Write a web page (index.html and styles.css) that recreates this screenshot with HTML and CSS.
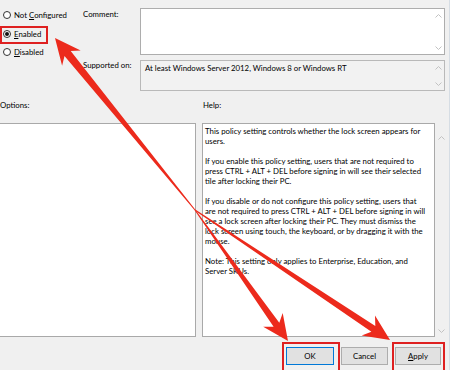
FILE: index.html
```html
<!DOCTYPE html>
<html lang="en">
<head>
    <meta charset="UTF-8">
    <title>Turn on lock screen</title>
    <link rel="stylesheet" href="styles.css">
</head>
<body>
    <div class="dialog">
        <div class="settings">
            <div class="state">
                <label class="radio"><span class="dot"></span><span>Not <u>C</u>onfigured</span></label>
                <label class="radio checked"><span class="dot"></span><span><u>E</u>nabled</span></label>
                <label class="radio"><span class="dot"></span><span><u>D</u>isabled</span></label>
            </div>
            <div class="field-label">Comment:</div>
            <div class="box comment">
                <div class="scroll">
                    <svg class="chev" viewBox="0 0 7 4"><path d="M0.5 3.5 L3.5 0.5 L6.5 3.5"/></svg>
                    <svg class="chev" viewBox="0 0 7 4"><path d="M0.5 0.5 L3.5 3.5 L6.5 0.5"/></svg>
                </div>
            </div>
            <div class="field-label supported-label">Supported on:</div>
            <div class="box supported">
                <span class="supported-text">At least Windows Server 2012, Windows 8 or Windows RT</span>
                <div class="scroll">
                    <svg class="chev" viewBox="0 0 7 4"><path d="M0.5 3.5 L3.5 0.5 L6.5 3.5"/></svg>
                    <svg class="chev" viewBox="0 0 7 4"><path d="M0.5 0.5 L3.5 3.5 L6.5 0.5"/></svg>
                </div>
            </div>
        </div>

        <div class="panes-head">
            <span class="options-title">Options:</span>
            <span>Help:</span>
        </div>

        <div class="panes">
            <div class="options"></div>
            <div class="help">
                <div class="help-text">
                    <p>This policy setting controls whether the lock screen appears for<br>users.</p>
                    <p>If you enable this policy setting, users that are not required to<br>press CTRL + ALT + DEL before signing in will see their selected<br>tile after locking their PC.</p>
                    <p>If you disable or do not configure this policy setting, users that<br>are not required to press CTRL + ALT + DEL before signing in will<br>see a lock screen after locking their PC. They must dismiss the<br>lock screen using touch, the keyboard, or by dragging it with the<br>mouse.</p>
                    <p>Note: This setting only applies to Enterprise, Education, and<br>Server SKUs.</p>
                </div>
                <div class="scroll help-scroll">
                    <svg class="chev" viewBox="0 0 7 4"><path d="M0.5 3.5 L3.5 0.5 L6.5 3.5"/></svg>
                    <svg class="chev" viewBox="0 0 7 4"><path d="M0.5 0.5 L3.5 3.5 L6.5 0.5"/></svg>
                </div>
            </div>
        </div>

        <div class="buttons">
            <button class="btn default" type="button">OK</button>
            <button class="btn cancel" type="button">Cancel</button>
            <button class="btn apply" type="button"><u>A</u>pply</button>
        </div>
    </div>

    <!-- annotation layer -->
    <div class="mark mark-enabled"></div>
    <div class="mark mark-ok"></div>
    <div class="mark mark-apply"></div>
    <svg class="arrows" viewBox="0 0 450 370">
        <polygon points="195.4,209.7 70.7,51.0 80.7,50.6 55,38 62.1,65.7 64.5,56.0 194.6,210.3"/>
        <polygon points="194.6,210.3 273.6,326.7 263.2,326.7 288,341 282.7,312.9 279.3,322.7 195.4,209.7"/>
        <polygon points="194.7,210.4 371.4,331.8 361.7,335.6 390,340 375.0,315.6 375.3,326.0 195.3,209.6"/>
    </svg>
</body>
</html>
```

FILE: styles.css
```css
body {
    margin: 0;
    width: 450px;
    height: 370px;
    overflow: hidden;
    background-color: #f0f0f0;
    font-family: Lato, "Noto Sans", sans-serif;
    font-size: 7.8px;
    line-height: 10px;
    color: #000;
    position: relative;
}
.dialog {
    width: 449px;
    height: 370px;
    border-right: 1px solid #d6dde4;
}
.settings {
    display: grid;
    grid-template-columns: 83px 57px 305px;
    grid-template-rows: 47px 31px;
    row-gap: 5px;
    padding-top: 8px;
}
.state {
    grid-row: 1 / 3;
    display: flex;
    flex-direction: column;
    margin-top: -2px;
    padding-left: 3px;
}
.radio {
    display: flex;
    align-items: center;
    height: 18.5px;
    white-space: nowrap;
}
.dot {
    width: 8px;
    height: 8px;
    box-sizing: border-box;
    border: 1px solid #333;
    border-radius: 50%;
    background-color: #fff;
    margin-right: 3px;
    display: flex;
    align-items: center;
    justify-content: center;
}
.checked .dot::after {
    content: "";
    width: 4px;
    height: 4px;
    border-radius: 50%;
    background-color: #111;
}
.field-label {
    padding-top: 1px;
    white-space: nowrap;
}
.supported-label {
    padding-top: 0;
}
.box {
    border: 1px solid #adadad;
    display: flex;
    justify-content: space-between;
}
.comment {
    background-color: #fff;
}
.supported {
    background-color: #f2f2f2;
    border-color: #b9b9b9;
}
.supported-text {
    padding: 2px 0 0 4px;
    white-space: nowrap;
}
.scroll {
    width: 11px;
    display: flex;
    flex-direction: column;
    justify-content: space-between;
    align-items: center;
    padding: 5px 0 4px;
    margin-left: auto;
}
.chev {
    width: 7px;
    height: 4px;
    fill: none;
    stroke: #c2c2c2;
    stroke-width: 1;
}
.panes-head {
    display: flex;
    margin-top: 9px;
}
.options-title {
    width: 203px;
}
.panes {
    display: flex;
    gap: 6px;
    margin-top: 13px;
    height: 214px;
}
.options {
    width: 197px;
    margin-left: -1px;
    box-sizing: border-box;
    border: 1px solid #a9a9a9;
    background-color: #fff;
}
.help {
    display: flex;
    width: 245px;
}
.help-text {
    width: 233px;
    box-sizing: border-box;
    border: 1px solid #a9a9a9;
    background-color: #fff;
    padding: 2px 0 0 2px;
    white-space: nowrap;
}
.help-text p {
    margin: 0 0 10px;
}
.help-scroll {
    width: 12px;
    padding: 13px 0 4px;
}
.buttons {
    display: flex;
    justify-content: flex-end;
    gap: 7px;
    padding-right: 8px;
    margin-top: 10px;
}
.btn {
    height: 18px;
    padding: 0;
    font-family: inherit;
    font-size: 7.8px;
    color: #000;
    background-color: #e1e1e1;
    border: 1px solid #adadad;
}
.btn.default {
    width: 48px;
    border-color: #0078d7;
}
.btn.cancel {
    width: 47px;
}
.btn.apply {
    width: 46px;
}
.mark {
    position: absolute;
    border: 2px solid #de2020;
    box-sizing: border-box;
}
.mark-enabled {
    left: 0;
    top: 26px;
    width: 48px;
    height: 18px;
}
.mark-ok {
    left: 282px;
    top: 342px;
    width: 58px;
    height: 30px;
}
.mark-apply {
    left: 392px;
    top: 342px;
    width: 53px;
    height: 30px;
}
.arrows {
    position: absolute;
    left: 0;
    top: 0;
    width: 450px;
    height: 370px;
    fill: #ec2a1c;
}
```
